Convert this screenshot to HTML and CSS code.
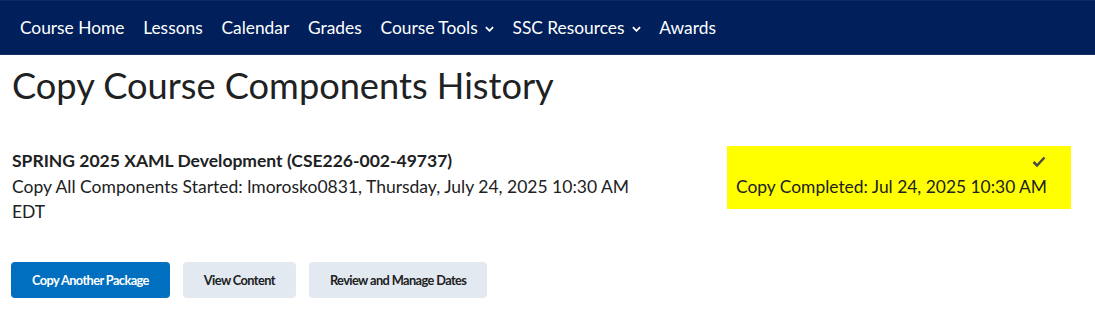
FILE: index.html
```html
<!DOCTYPE html>
<html lang="en">
<head>
    <meta charset="UTF-8">
    <title>Copy Course Components History</title>
    <link rel="stylesheet" href="styles.css">
</head>
<body>

<!-- Barra de navegación -->
<nav class="navbar">
    <a class="nav-item">Course Home</a>
    <a class="nav-item">Lessons</a>
    <a class="nav-item">Calendar</a>
    <a class="nav-item">Grades</a>
    <a class="nav-item">Course Tools <svg class="chevron" viewBox="0 0 10 6"><path d="M1 1l4 4 4-4" /></svg></a>
    <a class="nav-item">SSC Resources <svg class="chevron" viewBox="0 0 10 6"><path d="M1 1l4 4 4-4" /></svg></a>
    <a class="nav-item">Awards</a>
</nav>

<main class="page">
    <h1>Copy Course Components History</h1>

    <div class="history-row">
        <div class="history-info">
            <div class="course-name">SPRING 2025 XAML Development (CSE226-002-49737)</div>
            <div class="course-detail">Copy All Components Started: lmorosko0831, Thursday, July 24, 2025 10:30 AM EDT</div>
        </div>
        <div class="status">
            <svg class="check" viewBox="0 0 14 12"><path d="M1.5 6.5l3.5 3.5 7.5-8" /></svg>
            <div class="status-text">Copy Completed: Jul 24, 2025 10:30 AM</div>
        </div>
    </div>

    <div class="actions">
        <button class="btn btn-primary">Copy Another Package</button>
        <button class="btn">View Content</button>
        <button class="btn">Review and Manage Dates</button>
    </div>
</main>

</body>
</html>
```

FILE: styles.css
```css
body {
    margin: 0;
    font-family: Lato, "Open Sans", sans-serif;
    color: #202122;
    background-color: #ffffff;
}

.navbar {
    display: flex;
    align-items: center;
    height: 53px;
    padding: 0 1px 0 10.5px;
    background-color: #001f5b;
    border-top: 1px solid #0c2a66;
    border-bottom: 1px solid #1a3469;
}

.nav-item {
    display: flex;
    align-items: center;
    padding: 0 9.4px;
    color: #ffffff;
    font-size: 17.35px;
    white-space: nowrap;
}

.chevron {
    width: 9px;
    height: 6px;
    margin-left: 7px;
    margin-top: 2px;
    fill: none;
    stroke: #ffffff;
    stroke-width: 2;
}

.page {
    padding: 0 12px;
}

h1 {
    margin: 8px 0 0;
    font-size: 36.2px;
    font-weight: 400;
    line-height: 44px;
}

.history-row {
    display: flex;
    justify-content: space-between;
    align-items: flex-start;
    margin-top: 39px;
}

.history-info {
    width: 640px;
    padding-top: 2px;
    font-size: 17.5px;
    line-height: 25.5px;
}

.course-name {
    font-weight: 700;
}

.status {
    display: flex;
    flex-direction: column;
    width: 326px;
    margin-right: 12px;
    padding: 9px 9px;
    background-color: #ffff00;
    font-size: 17.4px;
    line-height: 26px;
}

.check {
    align-self: flex-end;
    width: 14px;
    height: 13px;
    margin-right: 16px;
    margin-bottom: 6px;
    fill: none;
    stroke: #494a3d;
    stroke-width: 2.5;
}

.actions {
    display: flex;
    gap: 13px;
    margin-top: 37px;
    margin-left: -1px;
}

.btn {
    height: 36px;
    padding: 0 21px;
    border: none;
    border-radius: 4px;
    background-color: #e3e9f1;
    color: #202122;
    font-family: Lato, "Open Sans", sans-serif;
    font-size: 12.8px;
    font-weight: 700;
    letter-spacing: -0.6px;
}

.btn-primary {
    background-color: #006fbf;
    color: #ffffff;
}
```
